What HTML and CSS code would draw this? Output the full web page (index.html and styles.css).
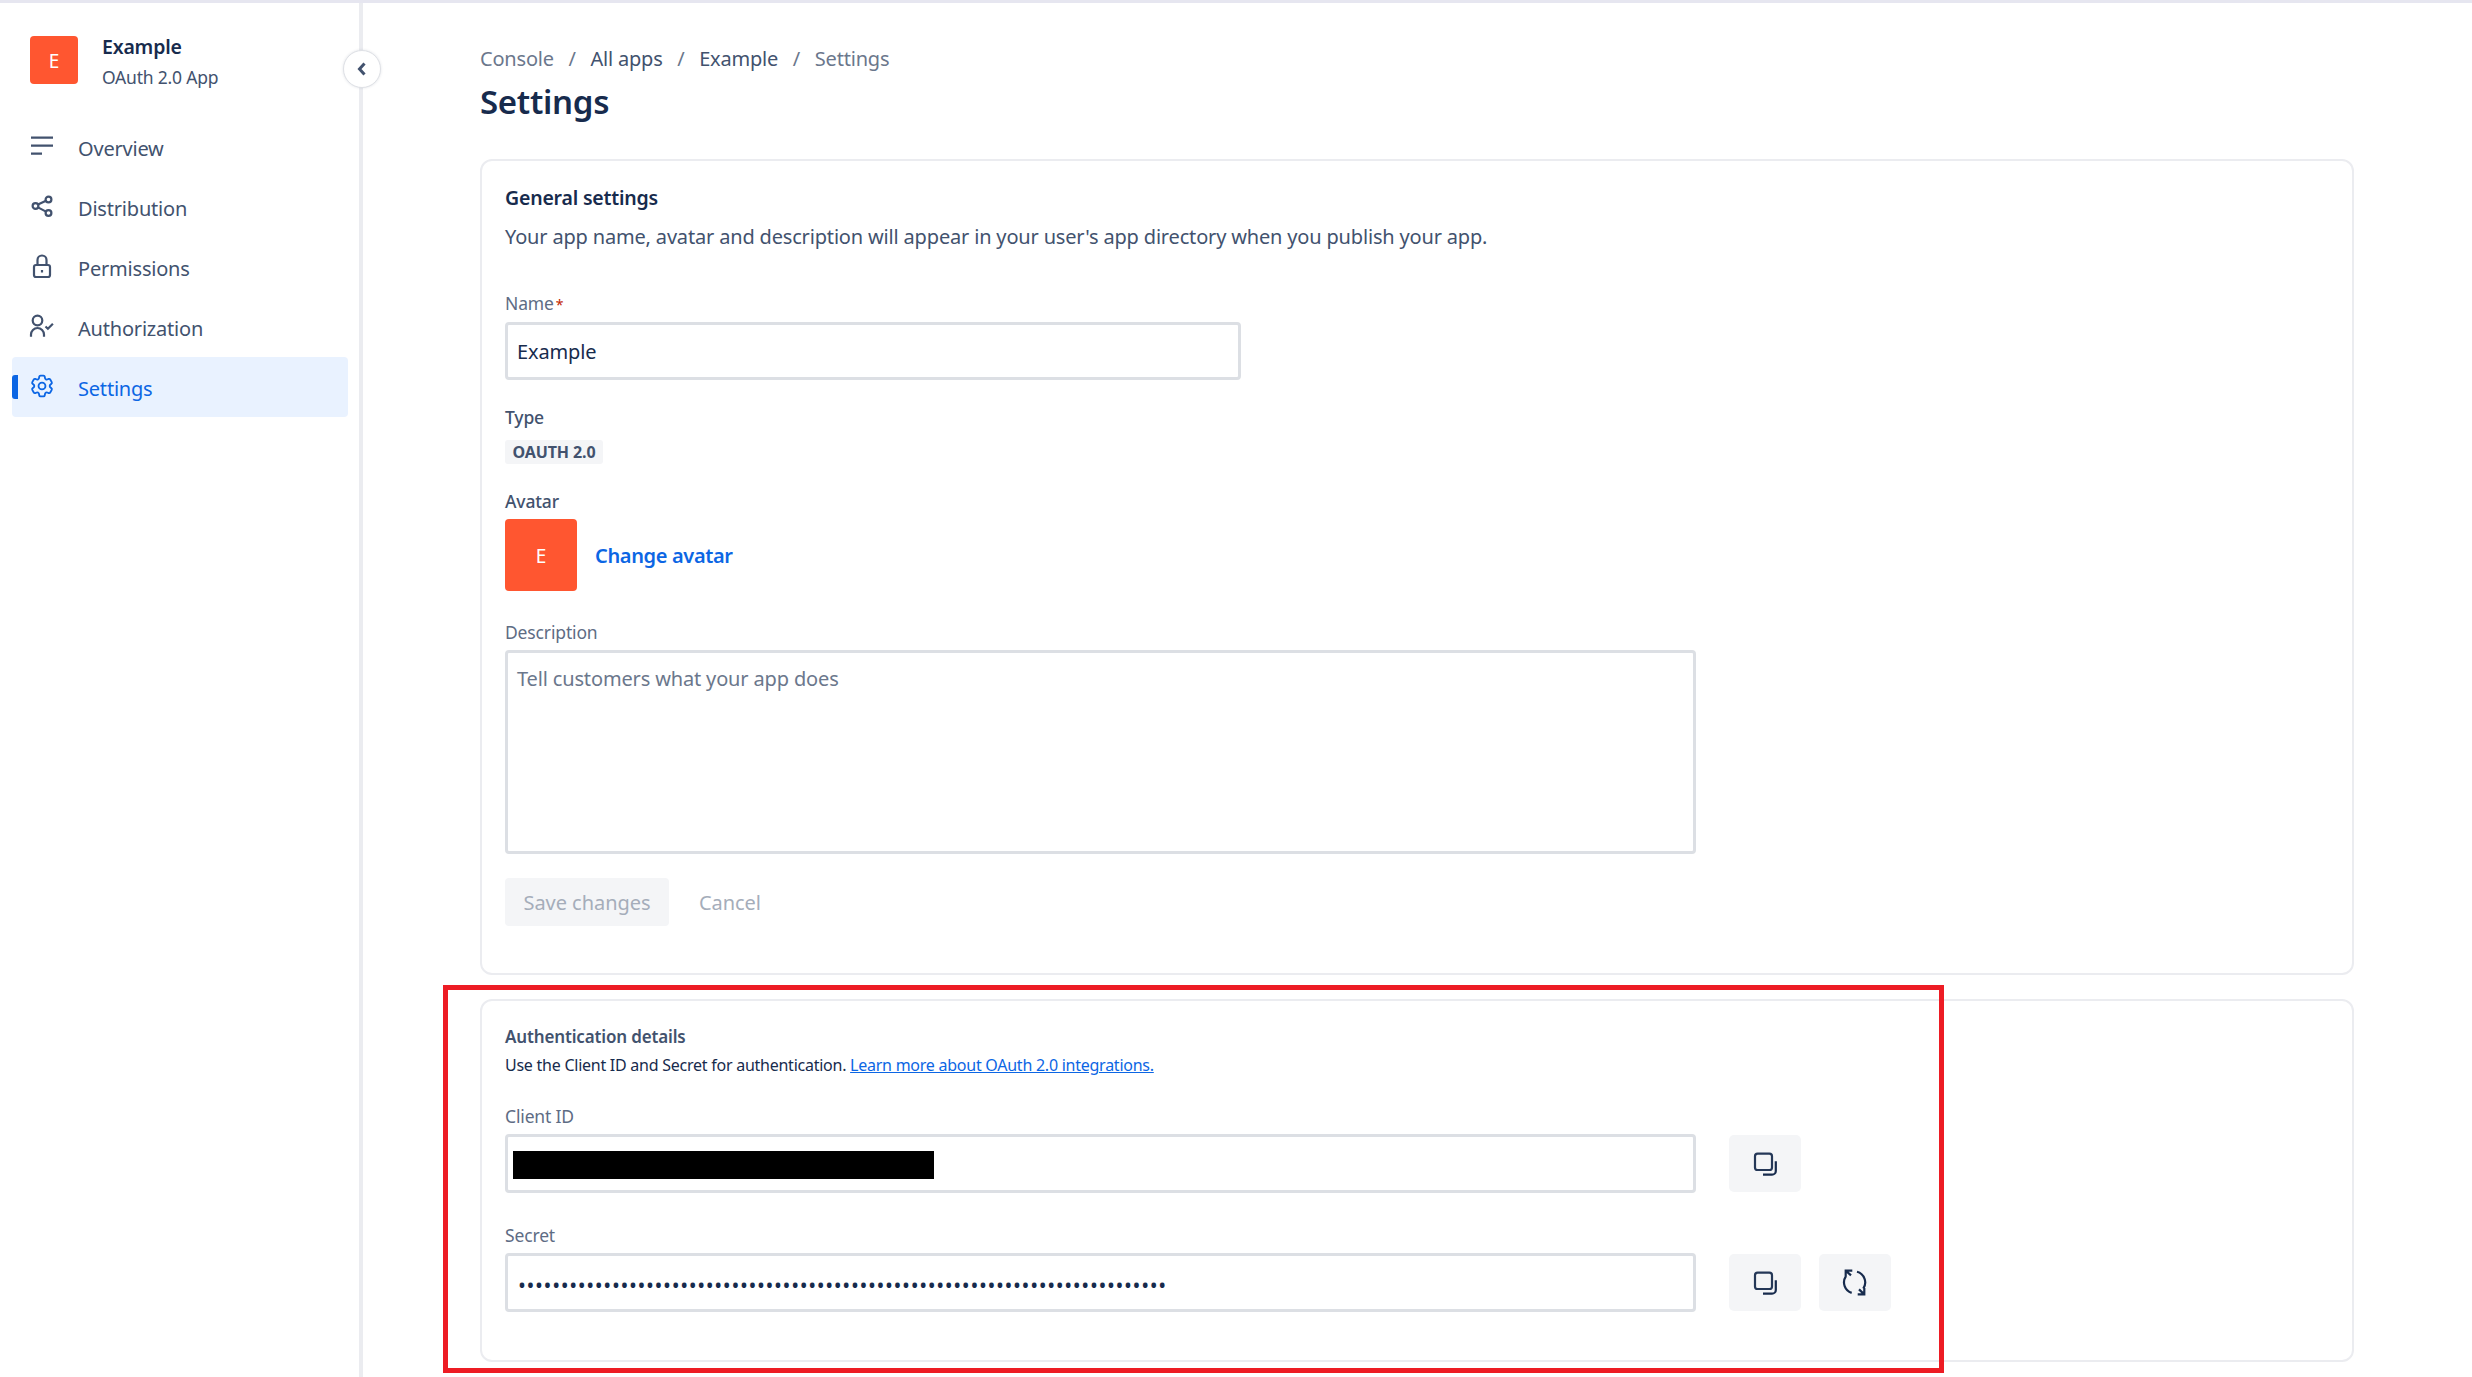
FILE: index.html
```html
<!DOCTYPE html>
<html lang="en">
<head>
<meta charset="utf-8">
<title>Settings</title>
<link rel="stylesheet" href="styles.css">
</head>
<body>
<div class="app">
  <aside class="sidebar">
    <div class="app-head">
      <div class="app-icon">E</div>
      <div class="app-meta">
        <div class="app-name">Example</div>
        <div class="app-type">OAuth 2.0 App</div>
      </div>
    </div>
    <nav class="nav">
      <a class="nav-item">
        <svg class="nav-icon" viewBox="0 0 30 30"><path d="M3 5.7H25M3 13.7H25M3 21.7H14"/></svg>
        <span>Overview</span>
      </a>
      <a class="nav-item">
        <svg class="nav-icon" viewBox="0 0 30 30"><circle cx="7.5" cy="14" r="2.9"/><circle cx="20.5" cy="7.5" r="2.9"/><circle cx="20.5" cy="21" r="2.9"/><path d="M10 12.6L18 8.8M10 15.4L18 19.6"/></svg>
        <span>Distribution</span>
      </a>
      <a class="nav-item">
        <svg class="nav-icon" viewBox="0 0 30 30"><rect x="6" y="13" width="16" height="12" rx="2"/><path d="M9.5 13V8a4.5 4.5 0 0 1 9 0v5M14 18v2.5"/></svg>
        <span>Permissions</span>
      </a>
      <a class="nav-item">
        <svg class="nav-icon" viewBox="0 0 30 30"><circle cx="9.5" cy="8.5" r="4.8"/><path d="M3 24.7v-2.2a6.5 6.5 0 0 1 13 0v2.2M17.5 14.5l2.4 2.2 5-5"/></svg>
        <span>Authorization</span>
      </a>
      <a class="nav-item active">
        <svg class="nav-icon" viewBox="0 0 30 30"><g transform="translate(0.2 0.2) scale(1.15)"><path d="M9.594 3.94c.09-.542.56-.94 1.11-.94h2.593c.55 0 1.02.398 1.11.94l.213 1.281c.063.374.313.686.645.87.074.04.147.083.22.127.325.196.72.257 1.075.124l1.217-.456a1.125 1.125 0 0 1 1.37.49l1.296 2.247a1.125 1.125 0 0 1-.26 1.431l-1.003.827c-.293.241-.438.613-.43.992a7.723 7.723 0 0 1 0 .255c-.008.378.137.75.43.991l1.004.827c.424.35.534.955.26 1.43l-1.298 2.247a1.125 1.125 0 0 1-1.369.491l-1.217-.456c-.355-.133-.75-.072-1.076.124a6.47 6.47 0 0 1-.22.128c-.331.183-.581.495-.644.869l-.213 1.281c-.09.543-.56.94-1.11.94h-2.594c-.55 0-1.019-.398-1.11-.94l-.213-1.281c-.062-.374-.312-.686-.644-.87a6.52 6.52 0 0 1-.22-.127c-.325-.196-.72-.257-1.076-.124l-1.217.456a1.125 1.125 0 0 1-1.369-.49l-1.297-2.247a1.125 1.125 0 0 1 .26-1.431l1.004-.827c.292-.24.437-.613.43-.991a6.932 6.932 0 0 1 0-.255c.007-.38-.138-.751-.43-.992l-1.004-.827a1.125 1.125 0 0 1-.26-1.43l1.297-2.247a1.125 1.125 0 0 1 1.37-.491l1.216.456c.356.133.751.072 1.076-.124.072-.044.146-.086.22-.128.332-.183.582-.495.644-.869l.214-1.28Z"/><circle cx="12" cy="12" r="3"/></g></svg>
        <span>Settings</span>
      </a>
    </nav>
    <button class="collapse" type="button" aria-label="Collapse">
      <svg viewBox="0 0 12 16"><path d="M8.5 2.5L3.5 8L8.5 13.5"/></svg>
    </button>
  </aside>

  <main class="main">
    <div class="crumbs">
      <span class="crumb-muted">Console</span><span class="sep">/</span>
      <span>All apps</span><span class="sep">/</span>
      <span>Example</span><span class="sep">/</span>
      <span class="crumb-muted">Settings</span>
    </div>
    <h1 class="title">Settings</h1>

    <section class="card card-general">
      <h2 class="card-title">General settings</h2>
      <p class="card-desc">Your app name, avatar and description will appear in your user's app directory when you publish your app.</p>

      <label class="label label-name">Name<span class="req">*</span></label>
      <input class="field field-name" type="text" value="Example">

      <div class="label label-strong label-type">Type</div>
      <div class="tag">OAUTH 2.0</div>

      <div class="label label-strong label-avatar">Avatar</div>
      <div class="avatar-row">
        <div class="avatar">E</div>
        <a class="change-avatar">Change avatar</a>
      </div>

      <label class="label label-desc">Description</label>
      <textarea class="field field-area" placeholder="Tell customers what your app does"></textarea>

      <div class="actions">
        <button class="btn-save" type="button" disabled>Save changes</button>
        <button class="btn-cancel" type="button" disabled>Cancel</button>
      </div>
    </section>

    <section class="card card-auth">
      <h2 class="auth-title">Authentication details</h2>
      <p class="auth-desc">Use the Client ID and Secret for authentication. <a class="auth-link">Learn more about OAuth 2.0 integrations.</a></p>

      <div class="label label-client">Client ID</div>
      <div class="secret-row">
        <div class="field field-static"><span class="redact"></span></div>
        <button class="icon-btn" type="button" aria-label="Copy">
          <svg viewBox="0 0 30 30"><rect x="5" y="4.7" width="17" height="16.3" rx="2.6" class="front"/><path d="M13 25.7h9a3.8 3.8 0 0 0 3.8-3.8V12.2"/></svg>
        </button>
      </div>

      <div class="label label-secret">Secret</div>
      <div class="secret-row">
        <div class="field field-static field-dots"><span class="dots">••••••••••••••••••••••••••••••••••••••••••••••••••••••••••••••••••••••••••••</span></div>
        <button class="icon-btn" type="button" aria-label="Copy">
          <svg viewBox="0 0 30 30"><rect x="5" y="4.7" width="17" height="16.3" rx="2.6" class="front"/><path d="M13 25.7h9a3.8 3.8 0 0 0 3.8-3.8V12.2"/></svg>
        </button>
        <button class="icon-btn" type="button" aria-label="Regenerate">
          <svg viewBox="0 0 30 30"><path d="M11.7 24.9A11 11 0 0 1 5.8 8.4M12.3 2.6H5.7V8.8M5.7 2.6L11 7.4M17 3.8A11 11 0 0 1 23.3 20.6M17.7 26.4H24.3V20M24.3 26.4L19 21.4"/></svg>
        </button>
      </div>
    </section>
  </main>
</div>
<div class="highlight"></div>
</body>
</html>
```

FILE: styles.css
```css
* { box-sizing: border-box; }
html, body { margin: 0; padding: 0; background: #fff; }
body {
  height: 1377px;
  overflow: hidden;
  font-family: "Noto Sans", "Open Sans", sans-serif;
  color: #172b4d;
  position: relative;
  border-top: 3px solid #e6e6f0;
}
.app { display: flex; height: 1374px; }

.sidebar {
  width: 363px;
  flex: none;
  border-right: 4px solid #ebecf0;
  padding: 33px 11px 0 12px;
  position: relative;
}
.app-head { display: flex; align-items: flex-start; height: 81px; padding-left: 18px; gap: 24px; }
.app-icon {
  width: 48px; height: 48px; border-radius: 4px;
  background: #ff5630; color: #fff;
  display: flex; align-items: center; justify-content: center;
  font-size: 19px; padding-top: 2px;
}
.app-meta { margin-top: -4px; }
.app-name { font-size: 19.5px; font-weight: 600; line-height: 30px; letter-spacing: -0.2px; }
.app-type { font-size: 17.5px; line-height: 30px; color: #42526e; letter-spacing: -0.2px; }

.nav { display: flex; flex-direction: column; }
.nav-item {
  display: flex; align-items: center; gap: 20px;
  height: 60px; padding-left: 16px; border-radius: 4px;
  font-size: 20px; color: #42526e; letter-spacing: -0.2px;
  position: relative;
}
.nav-item span { position: relative; top: 1px; }
.nav-icon { width: 30px; height: 30px; flex: none; fill: none; stroke: #42526e; stroke-width: 2.2; margin-top: -1px; }
.nav-item.active { background: #e9f2ff; color: #0c66e4; }
.nav-item.active .nav-icon { stroke: #0c66e4; stroke-width: 1.9; }
.nav-item.active::before {
  content: ""; position: absolute; left: 0; top: 18px;
  width: 6px; height: 24px; background: #0c66e4; border-radius: 3px 0 0 3px;
}
.nav-item.active .nav-icon g { stroke-width: 1.6; }

.collapse {
  position: absolute; right: -22px; top: 47px;
  width: 38px; height: 38px; border-radius: 50%;
  background: #fff; border: 1px solid #dfe1e6;
  box-shadow: 0 0 3px rgba(9, 30, 66, 0.12);
  display: flex; align-items: center; justify-content: center; padding: 0;
}
.collapse svg { width: 12px; height: 16px; fill: none; stroke: #42526e; stroke-width: 3; }

.main { flex: 1; min-width: 0; padding: 40px 118px 0 117px; }
.crumbs { display: flex; align-items: center; height: 30px; font-size: 20px; color: #42526e; letter-spacing: -0.2px; }
.crumb-muted { color: #6b778c; }
.sep { margin: 0 14.7px; color: #6b778c; }
.title { margin: 7px 0 35px; font-size: 33px; line-height: 44px; font-weight: 600; letter-spacing: -0.3px; }

.card { border: 2px solid #ebecf0; border-radius: 12px; padding: 0 23px; background: #fff; }
.card-general { height: 816px; padding-top: 23px; }
.card-auth { height: 363px; margin-top: 24px; padding-top: 24px; }
.card-title { margin: 0; font-size: 19.5px; line-height: 28px; font-weight: 600; letter-spacing: -0.2px; }
.card-desc { margin: 10px 0 0; font-size: 20px; line-height: 30px; color: #42526e; letter-spacing: -0.17px; }

.label { display: block; height: 24px; font-size: 17.5px; line-height: 24px; color: #5e6c84; letter-spacing: -0.15px; }
.label-strong { color: #42526e; font-weight: 500; }
.label-name { margin-top: 39px; }
.label-type { margin-top: 25px; }
.label-avatar { margin-top: 25px; }
.label-desc { margin-top: 29px; }
.label-client { margin-top: 27px; }
.label-secret { margin-top: 30px; }
.req { color: #bf2600; margin-left: 2px; font-size: 14px; line-height: 1; }

.field {
  display: block;
  width: 1191px; height: 59px;
  border: 3px solid #dcdfe4; border-radius: 4px;
  background: #fff; outline: none;
  font: inherit; font-size: 20px; color: #172b4d; letter-spacing: -0.15px;
  padding: 0 9px;
}
.field-name { width: 736px; height: 58px; margin-top: 7px; padding-top: 1px; }
.field-area { height: 204px; margin-top: 6px; padding: 11px 9px; resize: none; line-height: 30px; }
.field-area::placeholder { color: #6b778c; opacity: 1; }

.tag {
  margin-top: 11px; width: 98px; height: 24px; border-radius: 3px;
  background: #f4f5f7; color: #42526e;
  font-size: 16px; line-height: 24px; font-weight: 700; text-align: center; letter-spacing: -0.1px;
}
.avatar-row { display: flex; align-items: center; gap: 18px; margin-top: 6px; }
.avatar {
  width: 72px; height: 72px; border-radius: 4px; background: #ff5630; color: #fff;
  display: flex; align-items: center; justify-content: center; font-size: 19px; padding-top: 1px;
}
.change-avatar { font-size: 20px; font-weight: 600; color: #0c66e4; letter-spacing: -0.35px; padding-top: 1px; }

.actions { display: flex; align-items: center; margin-top: 24px; gap: 30px; }
.btn-save, .btn-cancel { font: inherit; font-size: 20px; letter-spacing: -0.05px; border: 0; color: #a5adba; padding: 0; }
.btn-save { width: 164px; height: 48px; background: #f4f5f7; border-radius: 4px; padding-top: 1px; }
.btn-cancel { background: none; padding-top: 1px; }

.auth-title { margin: 0; font-size: 17px; line-height: 24px; font-weight: 600; color: #42526e; letter-spacing: -0.15px; }
.auth-desc { margin: 4px 0 0; font-size: 16px; line-height: 24px; color: #172b4d; letter-spacing: -0.25px; }
.auth-link { color: #0c66e4; text-decoration: underline; }

.secret-row { display: flex; align-items: center; margin-top: 6px; }
.field-static { display: flex; align-items: center; flex: none; padding: 0; position: relative; }
.redact { display: block; width: 421px; height: 28px; margin: 3px 0 0 5px; background: #000; }
.field-dots { padding-left: 10px; }
.dots { font-size: 21px; letter-spacing: 0.64px; line-height: 1; white-space: nowrap; position: relative; top: 3px; }
.icon-btn {
  width: 72px; height: 57px; flex: none; margin-left: 18px;
  background: #f4f5f7; border: 0; border-radius: 5px; padding: 0;
  display: flex; align-items: center; justify-content: center;
}
.field-static + .icon-btn { margin-left: 33px; }
.icon-btn svg { width: 30px; height: 30px; fill: none; stroke: #172b4d; stroke-width: 2.2; }
.icon-btn .front { stroke: #253858; }

.highlight {
  position: absolute; left: 443px; top: 982px;
  width: 1501px; height: 388px;
  border: 5px solid #ed1c24;
  pointer-events: none;
}
```
